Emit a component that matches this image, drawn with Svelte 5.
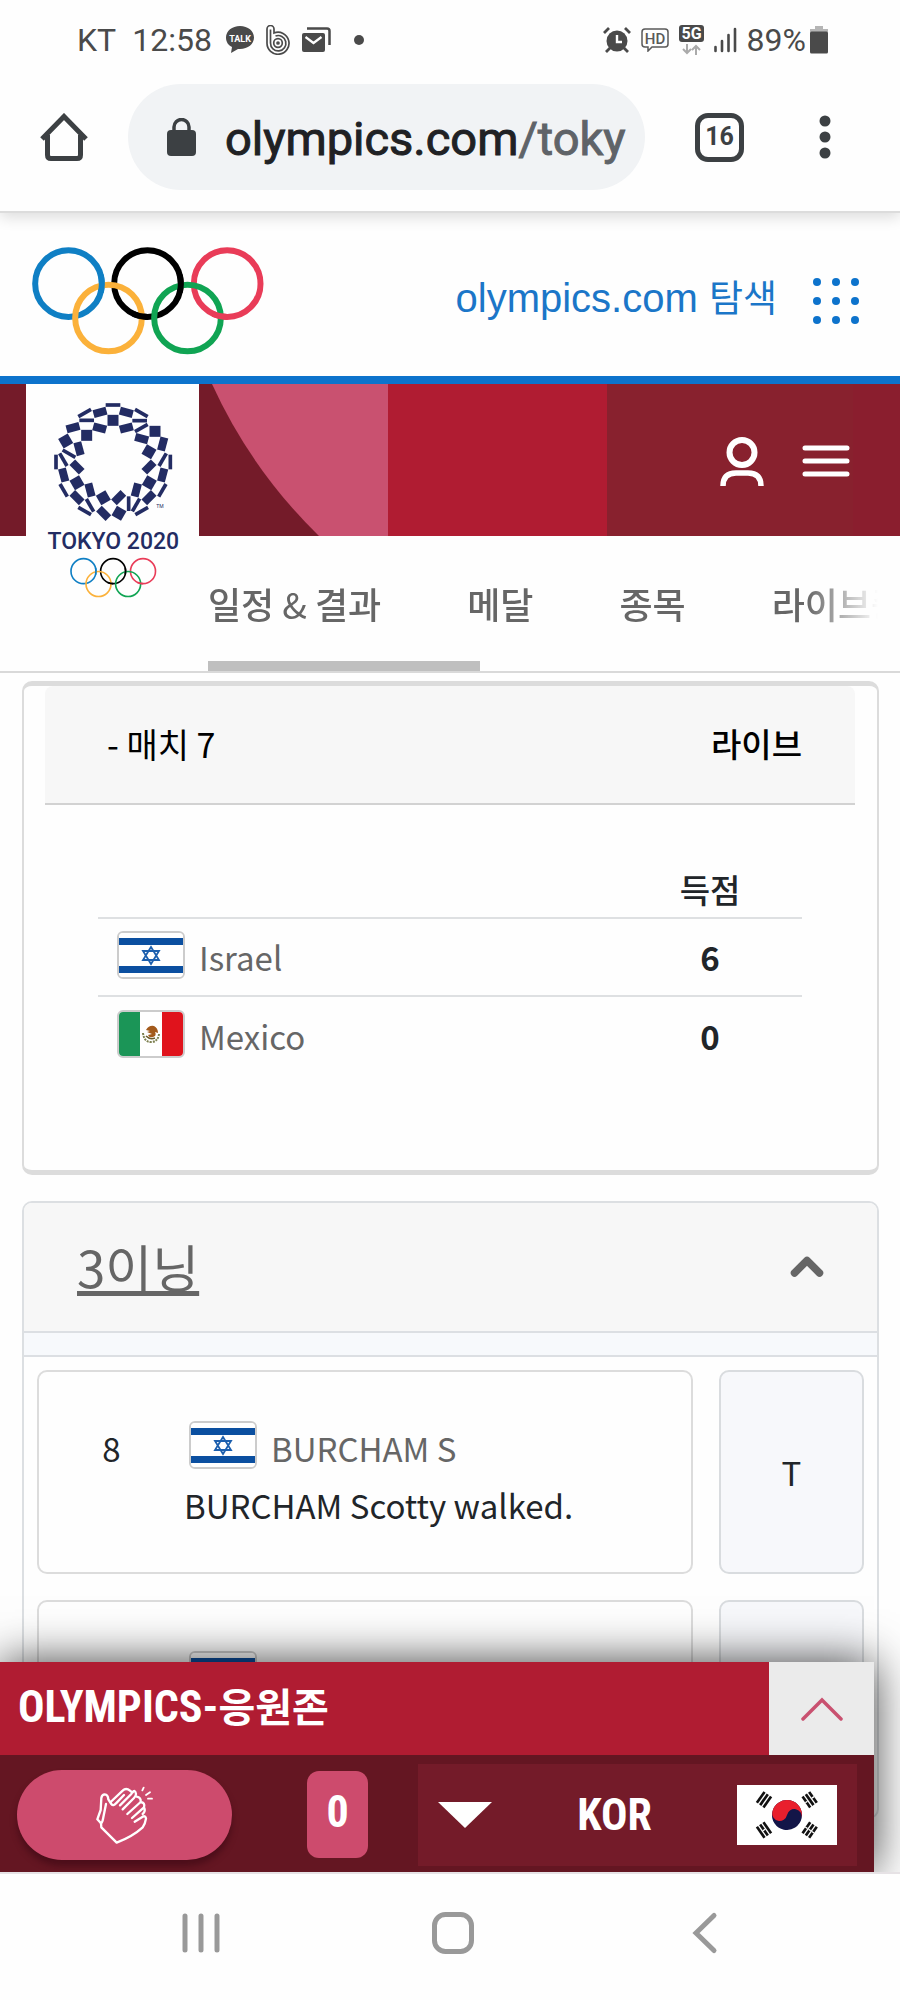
<script>
  const squares = [
    // cx, cy, width, height, angle
    [341, 105, 44, 11, 0], [341, 151, 33, 33, 0],
    [302, 127, 40, 24, -15], [381, 127, 40, 24, 15],
    [256, 129, 44, 11, -30], [426, 129, 44, 11, 30],
    [262, 151, 44, 11, 0], [421, 152, 44, 11, 0],
    [301, 174, 40, 24, 15], [381, 174, 40, 24, -15],
    [221, 173, 40, 24, -15], [262, 196, 33, 33, 0],
    [199, 213, 33, 33, -30], [239, 236, 24, 40, -15],
    [209, 251, 44, 11, 30], [170, 276, 11, 44, 0],
    [192, 269, 44, 11, 60], [233, 291, 40, 24, 45],
    [193, 315, 24, 40, -15], [233, 338, 33, 33, -30],
    [193, 361, 44, 11, 60], [233, 383, 40, 24, 45],
    [272, 360, 24, 40, -15], [272, 406, 44, 11, 60],
    [256, 423, 44, 11, 30], [312, 383, 33, 33, -30],
    [313, 430, 40, 24, 45], [358, 383, 40, 24, -45],
    [359, 430, 33, 33, 30], [388, 401, 11, 44, 0],
    [410, 405, 44, 11, -60], [427, 423, 44, 11, -30],
    [411, 360, 24, 40, 15], [449, 383, 40, 24, -45],
    [489, 361, 44, 11, -60], [450, 338, 33, 33, 30],
    [490, 315, 24, 40, 15], [449, 291, 40, 24, -45],
    [490, 269, 44, 11, -60], [513, 276, 11, 44, 0],
    [449, 245, 33, 33, 30], [490, 222, 24, 40, 15],
    [427, 206, 40, 24, 15], [467, 184, 33, 33, 0],
    [426, 174, 44, 11, -30]
  ];
  const menu = ['메달', '종목', '라이브중'];
  const teams = [
    { name: 'Israel', flag: 'isr', score: 6 },
    { name: 'Mexico', flag: 'mex', score: 0 }
  ];
  const plays = [
    { order: '8', player: 'BURCHAM S', text: 'BURCHAM Scotty walked.', half: 'T' },
    { order: '', player: '', text: '', half: '' }
  ];
  const trigrams = [
    { x: 941, y: 749, a: -55, broken: [] },
    { x: 1078, y: 749, a: 55, broken: [0, 2] },
    { x: 941, y: 840, a: 55, broken: [1] },
    { x: 1078, y: 840, a: -55, broken: [0, 1, 2] }
  ];
</script>

{#snippet rings(sw)}
  <g fill="none" stroke-width={sw}>
    <circle cx="204" cy="220" r="100" stroke="#0f7fc4" />
    <circle cx="441" cy="220" r="100" stroke="#000" />
    <circle cx="680" cy="220" r="100" stroke="#e93c58" />
    <circle cx="324" cy="323" r="100" stroke="#fbb13a" />
    <circle cx="561" cy="323" r="100" stroke="#10a453" />
    <path d="M300.6 194A100 100 0 0 1 300.6 246" stroke="#0f7fc4" />
    <path d="M537.6 194A100 100 0 0 1 537.6 246M441 320A100 100 0 0 1 398.7 310.6" stroke="#000" />
    <path d="M680 320A100 100 0 0 1 637.7 310.6" stroke="#e93c58" />
  </g>
{/snippet}

{#snippet flag(code)}
  <svg class="flag" viewBox="0 0 64 44" preserveAspectRatio="none" aria-hidden="true">
    {#if code === 'mex'}
      <rect width="64" height="44" fill="#fff" />
      <rect width="21" height="44" fill="#1b9557" />
      <rect x="43" width="21" height="44" fill="#e0131c" />
      <path d="M24 21q1 9 8 9t8-8" fill="none" stroke="#7d8050" stroke-width="2" stroke-dasharray="2 1" />
      <path d="M27 18q3-5 8-4 4 2 4 7l-3-1q2 4-2 5-4 1-5-2l4-1-5-2 3-1z" fill="#a35a1c" />
      <path d="M27 24q4 4 9 2" fill="none" stroke="#6b5a2a" stroke-width="1.5" />
    {:else}
      <rect width="64" height="44" fill="#fff" />
      <rect y="5" width="64" height="7" fill="#0b4fa0" />
      <rect y="33" width="64" height="7" fill="#0b4fa0" />
      <path d="M32 14l8 13H24zM32 31l8-13H24z" fill="none" stroke="#1c5fae" stroke-width="1.8" />
    {/if}
  </svg>
{/snippet}

<div class="screen">
  <div class="status">
    <span class="carrier">KT</span>
    <span class="clock">12:58</span>
    <svg width="28" height="28" viewBox="0 0 28 28" aria-hidden="true">
      <path d="M14 0C6 0 0 5 0 11.500c0 4.500 2.500 8 6 9.500L5 27l7-4h2c8 0 14-5 14-11.500S22 0 14 0z" fill="#4a4a4a" />
      <text x="14" y="15.500" text-anchor="middle" font-size="9" font-weight="700" fill="#fff">TALK</text>
    </svg>
    <svg class="s-b" width="24" height="30" viewBox="0 0 24 30" fill="none" stroke="#4a4a4a" stroke-width="1.700" aria-hidden="true">
      <path d="M1 18V4a3 3 0 0 1 7 0v4a11 11 0 1 1-7 10z" />
      <path d="M4.500 18V4.500M4.500 18a7.700 7.700 0 1 0 5-7" />
      <circle cx="12" cy="18" r="4.300" /><circle cx="12" cy="18" r="1" />
    </svg>
    <svg class="s-mail" width="29" height="26" viewBox="0 0 29 26" aria-hidden="true">
      <rect y="6" width="23" height="19" rx="2" fill="#4a4a4a" />
      <path d="M5 1.500h20q2.500 0 2.500 2.500v14" fill="none" stroke="#4a4a4a" stroke-width="2.500" />
      <path d="M3.500 10l8 6 8-6" fill="none" stroke="#fff" stroke-width="2.200" />
    </svg>
    <svg class="s-dot" width="10" height="10" viewBox="0 0 10 10" aria-hidden="true"><circle cx="5" cy="5" r="5" fill="#4a4a4a" /></svg>
    <span class="fill"></span>
    <svg width="28" height="26" viewBox="0 0 28 26" aria-hidden="true">
      <circle cx="14" cy="14" r="10.500" fill="#4a4a4a" />
      <path d="M1 6l5-5M27 6l-5-5M7 21l-4 4M21 21l4 4" stroke="#4a4a4a" stroke-width="2.800" />
      <path d="M14 8v7h5" fill="none" stroke="#fff" stroke-width="2.400" />
    </svg>
    <svg width="28" height="24" viewBox="0 0 28 24" aria-hidden="true">
      <path d="M4 1h20q3 0 3 3v12q0 3-3 3H11l-4 4v-4H4q-3 0-3-3V4q0-3 3-3z" fill="none" stroke="#5a5a5a" stroke-width="1.500" />
      <text x="14" y="15.500" text-anchor="middle" font-size="15" font-weight="500" fill="#5a5a5a">HD</text>
    </svg>
    <svg width="25" height="30" viewBox="0 0 25 30" aria-hidden="true">
      <rect width="25" height="17" rx="3" fill="#4a4a4a" />
      <text x="12.500" y="14" text-anchor="middle" font-size="16" font-weight="700" fill="#fff">5G</text>
      <path d="M8 19v9m-4-4l4 4 4-4M17 30v-9m-4 4l4-4 4 4" fill="none" stroke="#aaa" stroke-width="2" />
    </svg>
    <svg width="23" height="26" viewBox="0 0 23 26" stroke="#4a4a4a" stroke-width="2.600" stroke-linecap="round" aria-hidden="true">
      <path d="M1.500 20v4M8 14v10M14.500 8v16M21 2v22" />
    </svg>
    <span class="charge"><span>89%</span>
      <svg width="18" height="28" viewBox="0 0 18 28" aria-hidden="true">
        <path d="M5 0h8v3h5v3H0V3h5z" fill="#b5b5b5" /><rect y="5.500" width="18" height="22" rx="1.500" fill="#4a4a4a" />
      </svg>
    </span>
  </div>

  <div class="toolbar">
    <button class="icon" aria-label="Home">
      <svg width="48" height="48" viewBox="0 0 48 48" fill="none" stroke="#3c4043" stroke-width="5" stroke-linejoin="round" aria-hidden="true">
        <path d="M2 26L24 3.500 46 26" stroke-linejoin="miter" /><path d="M7.500 22v20q0 3.500 3.500 3.500h26q3.500 0 3.500-3.500V22" />
      </svg>
    </button>
    <button class="address">
      <svg width="29" height="38" viewBox="0 0 29 38" aria-hidden="true">
        <rect y="12" width="29" height="26" rx="4" fill="#3c4043" />
        <path d="M7 14V9a7.500 7.500 0 0 1 15 0v5" fill="none" stroke="#3c4043" stroke-width="3.500" />
      </svg>
      <span class="url">olympics.com<span class="path">/toky</span></span>
    </button>
    <button class="icon tabs" aria-label="Tabs">16</button>
    <button class="icon more" aria-label="More">
      <svg width="12" height="44" viewBox="0 0 12 44" fill="#3c4043" aria-hidden="true"><circle cx="6" cy="6" r="5.500" /><circle cx="6" cy="22" r="5.500" /><circle cx="6" cy="38" r="5.500" /></svg>
    </button>
  </div>

  <main>
    <header class="site">
      <a href="#top" aria-label="Olympics">
        <svg width="232" height="108" viewBox="95 110 695 324" aria-hidden="true">{@render rings(18)}</svg>
      </a>
      <a class="explore" href="#explore"><span class="label">olympics.com <span class="ko">탐색</span></span>
        <svg width="46" height="46" viewBox="0 0 46 46" fill="#0d73cc" aria-hidden="true">
          {#each [4, 23, 42] as y}{#each [4, 23, 42] as x}<circle cx={x} cy={y} r="4" />{/each}{/each}
        </svg>
      </a>
    </header>

    <div class="games">
      <div class="banner">
        <svg class="pattern" viewBox="0 0 900 151" preserveAspectRatio="none" aria-hidden="true">
          <rect width="900" height="151" fill="#741b29" />
          <path d="M212 0Q251 85 319 151H389V0z" fill="#c95170" />
          <rect x="388" width="220" height="151" fill="#b01c32" />
          <rect x="607" width="246" height="151" fill="#88212e" />
          <rect x="853" width="47" height="151" fill="#8a1e2e" />
        </svg>
        <button class="icon" aria-label="Account">
          <svg width="44" height="49" viewBox="0 0 44 49" fill="none" stroke="#fff" aria-hidden="true">
            <circle cx="22" cy="15.500" r="12.500" stroke-width="6" /><path d="M3 49q0-13 13-13h12q13 0 13 13" stroke-width="5.500" />
          </svg>
        </button>
        <button class="icon" aria-label="Menu">
          <svg width="48" height="34" viewBox="0 0 48 34" stroke="#fff" stroke-width="5" stroke-linecap="round" aria-hidden="true"><path d="M3 4h42M3 17h42M3 30h42" /></svg>
        </button>
      </div>
      <a class="emblem" href="#tokyo" aria-label="Tokyo 2020">
        <svg width="173" height="224" viewBox="80 42 519 672" aria-hidden="true">
          <g fill="#232c63">
            {#each squares as [x, y, w, h, a]}
              <rect x={x - w / 2} y={y - h / 2} width={w} height={h} transform="rotate({a} {x} {y})" />
            {/each}
            <text x="342" y="536" text-anchor="middle" font-size="69" font-weight="500">TOKYO 2020</text>
            <text x="482" y="415" text-anchor="middle" font-size="15">TM</text>
          </g>
          <g transform="translate(176 521) scale(.375)">{@render rings(13)}</g>
        </svg>
      </a>
      <nav>
        <div class="tabs-row">
          <a href="#schedule" class="current">일정 <span class="amp">&amp;</span> 결과</a>
          {#each menu as item}<a href="#{item}">{item}</a>{/each}
        </div>
      </nav>
    </div>

    <section class="match">
      <div class="match-head"><span>- 매치 7</span><strong>라이브</strong></div>
      <table>
        <thead><tr><td></td><th scope="col">득점</th></tr></thead>
        <tbody>
          {#each teams as t}
            <tr>
              <th scope="row"><span class="team">{@render flag(t.flag)}{t.name}</span></th>
              <td>{t.score}</td>
            </tr>
          {/each}
        </tbody>
      </table>
    </section>

    <section class="inning">
      <button class="inning-head">
        <span>3이닝</span>
        <svg width="34" height="23" viewBox="0 0 34 23" fill="none" stroke="#666" stroke-width="7.500" stroke-linejoin="round" stroke-linecap="round" aria-hidden="true"><path d="M4.500 18L17 5.500 29.500 18" /></svg>
      </button>
      <div class="strip"></div>
      <ul>
        {#each plays as p}
          <li>
            <div class="play">
              <span class="order">{p.order}</span>
              <div>
                <div class="player">{@render flag('isr')}{p.player}</div>
                <div>{p.text}</div>
              </div>
            </div>
            <div class="half">{p.half}</div>
          </li>
        {/each}
      </ul>
    </section>

    <aside class="cheer">
      <div class="cheer-top">
        <h2>OLYMPICS-<span class="ko">응원존</span></h2>
        <button class="expand" aria-label="Expand">
          <svg width="44" height="24" viewBox="0 0 44 24" fill="none" stroke="#c95170" stroke-width="3.500" stroke-linecap="round" aria-hidden="true"><path d="M3 22L22 3l19 19" /></svg>
        </button>
      </div>
      <div class="cheer-row">
        <button class="clap" aria-label="Clap">
          <svg width="60" height="60" viewBox="15 15 180 180" fill="none" stroke="#fff" stroke-width="7" stroke-linecap="round" stroke-linejoin="round" aria-hidden="true">
            <path d="M33 130L22 118 32 90 34 54Q36 43 44 43 54 44 55 58L64 72Q70 80 78 70L102 45" />
            <path d="M48 72L40 112Q38 126 33 130L34 142 80 188Q130 168 158 142 166 130 168 116 167 106 158 110L134 125" />
            <path d="M62 66L98 32Q108 22 120 32L127 38Q135 26 138 42 138 48 132 54L98 88" />
            <path d="M90 76L124 42M140 50Q154 52 152 66L112 102M152 66Q166 68 162 82L126 114M162 82Q168 94 158 102" />
            <path d="M157 31L161 23M168 45L180 37M174 56L186 56" stroke-width="5.500" />
          </svg>
        </button>
        <span class="count">0</span>
        <button class="country">
          <svg width="54" height="26" viewBox="0 0 54 26" aria-hidden="true"><path d="M0 0h54L27 26z" fill="#fff" /></svg>
          <span>KOR</span>
          <svg width="100" height="60" viewBox="860 705 300 180" aria-hidden="true">
            <rect x="860" y="705" width="300" height="180" fill="#fff" />
            <g transform="rotate(12 1010 795)">
              <circle cx="1010" cy="795" r="45" fill="#131548" />
              <path d="M965 795a45 45 0 0 1 90 0a22.500 22.500 0 0 0-45 0a22.500 22.500 0 0 1-45 0" fill="#e91f2d" />
            </g>
            {#each trigrams as t}
              <g transform="translate({t.x} {t.y}) rotate({t.a})">
                {#each [-12, 0, 12] as dy, i}
                  <rect x="-20" y={dy - 4} width="40" height="8" fill="#111" />
                  {#if t.broken.includes(i)}<rect x="-2" y={dy - 4} width="4" height="8" fill="#fff" />{/if}
                {/each}
              </g>
            {/each}
          </svg>
        </button>
      </div>
    </aside>
  </main>

  <div class="system">
    <button class="icon" aria-label="Recent apps"><svg width="44" height="44" viewBox="0 0 44 44" stroke="#999" stroke-width="5" stroke-linecap="round" aria-hidden="true"><path d="M6 5v34M22 5v34M38 5v34" /></svg></button>
    <button class="icon" aria-label="Home screen"><svg width="44" height="44" viewBox="0 0 44 44" fill="none" stroke="#999" stroke-width="5" aria-hidden="true"><rect x="3.500" y="3.500" width="37" height="37" rx="11" /></svg></button>
    <button class="icon" aria-label="Back"><svg width="44" height="44" viewBox="0 0 44 44" fill="none" stroke="#999" stroke-width="5" stroke-linecap="round" aria-hidden="true"><path d="M31 4.500L13 22l18 17.500" /></svg></button>
  </div>
</div>

<style>
  :global(body) { margin: 0; background: #fff; }
  .screen, .screen * { box-sizing: border-box; }
  .screen {
    display: flex;
    flex-direction: column;
    height: 100vh;
    overflow: hidden;
    font-family: "Noto Sans CJK KR", sans-serif;
    font-size: 33px;
    color: #212529;
    background: #fefefe;
  }
  button { border: 0; padding: 0; background: none; font: inherit; color: inherit; }
  a { color: inherit; text-decoration: none; }
  svg { display: block; flex: none; }
  .icon { display: flex; align-items: center; justify-content: center; }

  .status {
    display: flex;
    align-items: center;
    gap: 10px;
    height: 78px;
    padding: 2px 72px 0 77px;
    font: 32px/40px Roboto, sans-serif;
    color: #4a4a4a;
    background: #fefefe;
    position: relative;
    z-index: 3;
    flex: none;
  }
  .carrier { margin-right: 6px; }
  .clock { margin-right: 4px; }
  .s-b { margin-left: 2px; }
  .s-mail { margin-left: 2px; }
  .s-dot { margin-left: 13px; }
  .fill { flex: 1; }
  .charge { display: flex; align-items: center; gap: 4px; }

  .toolbar {
    display: flex;
    align-items: center;
    gap: 50px;
    padding: 6px 44px 21px 40px;
    border-bottom: 2px solid #dcdcdc;
    box-shadow: 0 4px 14px rgba(0, 0, 0, .14);
    position: relative;
    z-index: 2;
    font-family: Roboto, sans-serif;
    background: #fefefe;
    flex: none;
  }
  .address {
    flex: 1;
    min-width: 0;
    display: flex;
    align-items: center;
    gap: 29px;
    height: 106px;
    margin-left: -10px;
    padding: 0 20px 0 39px;
    border-radius: 53px;
    background: #f1f3f5;
    overflow: hidden;
  }
  .url { padding-top: 2px; font-size: 47px; color: #202124; white-space: nowrap; -webkit-text-stroke: 1px currentColor; }
  .path { color: #5f6368; }
  .tabs {
    width: 49px;
    height: 49px;
    border: 5px solid #3c4043;
    border-radius: 13px;
    font-size: 25px;
    line-height: 30px;
    font-weight: 700;
    color: #3c4043;
  }
  .more { width: 62px; }

  main { flex: 1; min-height: 0; overflow: hidden; position: relative; }
  .site {
    display: flex;
    align-items: center;
    justify-content: space-between;
    height: 171px;
    padding: 12px 41px 0 32px;
    border-bottom: 8px solid #0d73cc;
  }
  .explore {
    display: flex;
    align-items: center;
    gap: 36px;
    font: 40px/50px "Liberation Sans", sans-serif;
    color: #1b76c8;
  }
  .label { margin-bottom: 8px; }
  .ko { font: 37px/50px "Noto Sans CJK KR", sans-serif; }

  .games { position: relative; }
  .banner {
    position: relative;
    display: flex;
    align-items: center;
    justify-content: flex-end;
    gap: 38px;
    height: 152px;
    padding: 2px 50px 0 0;
  }
  .banner .icon { position: relative; }
  .pattern { position: absolute; inset: 0; width: 100%; height: 100%; }
  .emblem {
    position: absolute;
    top: 0;
    left: 26px;
    background: #fefefe;
    font-family: Roboto, sans-serif;
  }
  nav {
    height: 137px;
    padding: 0 22px 0 208px;
    border-bottom: 2px solid #d9d9d9;
  }
  .tabs-row {
    display: flex;
    gap: 86px;
    height: 135px;
    overflow: hidden;
    white-space: nowrap;
    font-size: 36px;
    line-height: 135px;
    font-weight: 500;
    color: #666;
    -webkit-mask-image: linear-gradient(to left, transparent, #000 72px);
    mask-image: linear-gradient(to left, transparent, #000 72px);
  }
  .current { position: relative; }
  .current::after {
    content: "";
    position: absolute;
    left: 0;
    bottom: 0;
    width: 272px;
    height: 10px;
    background: #bfbfbf;
  }
  .amp { font-weight: 400; }

  .match {
    margin: 8px 21px 0 22px;
    padding: 0 22px 95px 21px;
    border: 2px solid #dcdcdc;
    border-width: 5px 2px;
    border-radius: 10px;
  }
  .match-head {
    display: flex;
    justify-content: space-between;
    height: 119px;
    padding: 0 53px 0 62px;
    font-size: 34px;
    line-height: 115px;
    border-bottom: 2px solid #d2d2d2;
    border-radius: 8px 8px 0 0;
    background: #f7f7f7;
    color: #000;
  }
  strong { font-size: 33px; font-weight: 500; }
  table {
    width: calc(100% - 106px);
    margin: 60px 53px 0;
    border-spacing: 0;
    line-height: 48px;
  }
  th, td { padding: 0; border-bottom: 2px solid #dee0e2; text-align: center; font-weight: 500; }
  thead td, thead th { height: 54px; padding-bottom: 4px; }
  tbody th, tbody td { height: 78px; font-weight: 700; }
  tbody tr:last-child > * { border: 0; }
  tr > :last-child { width: 184px; }
  tbody th { text-align: left; font-weight: 400; color: #666; }
  .team { display: flex; align-items: center; gap: 14px; padding-left: 19px; }
  .flag {
    width: 68px;
    height: 48px;
    margin-bottom: 4px;
    border: 2px solid #ccc;
    border-radius: 6px;
  }

  .inning {
    margin: 26px 21px 0 22px;
    border: 2px solid #dcdfe2;
    border-radius: 10px;
    overflow: hidden;
  }
  .inning-head {
    display: flex;
    align-items: center;
    justify-content: space-between;
    width: 100%;
    height: 128px;
    padding: 0 53px 2px 53px;
    background: #f7f7f7;
    color: #666;
    font-size: 51px;
    line-height: 74px;
    text-decoration: underline;
    text-decoration-thickness: 5px;
    text-decoration-skip-ink: none;
    text-underline-offset: 3px;
  }
  .strip { height: 26px; border: solid #dcdfe3; border-width: 2px 0; background: #f7f9fc; }
  ul { list-style: none; margin: 0; padding: 13px; display: grid; gap: 26px; }
  li { display: grid; grid-template-columns: 1fr 145px; gap: 26px; height: 204px; }
  .play, .half { border: 2px solid #dcdcdc; border-radius: 10px; }
  .play {
    display: grid;
    grid-template-columns: 145px 1fr;
    padding-top: 48px;
    line-height: 57px;
    white-space: nowrap;
  }
  .order { text-align: center; }
  .player { display: flex; align-items: center; gap: 14px; height: 57px; padding-left: 5px; color: #666; }
  .player .flag { margin-bottom: 8px; }
  .half { display: flex; align-items: center; justify-content: center; background: #f7f8fb; border-color: #d9dcdf; }

  .cheer {
    position: absolute;
    left: 0;
    right: 26px;
    bottom: 0;
    box-shadow: 0 0 44px rgba(0, 0, 0, .75);
    color: #fff;
    font-family: "Roboto Condensed", Roboto, sans-serif;
    font-size: 44px;
    font-weight: 700;
  }
  .cheer-top { display: flex; height: 93px; background: #b01c32; }
  h2 { flex: 1; margin: 0; padding-left: 18px; font-size: 44px; line-height: 86px; white-space: nowrap; }
  h2 .ko { font: 700 40px/86px "Noto Sans CJK KR", sans-serif; }
  .expand { width: 105px; display: flex; align-items: center; justify-content: center; background: #ebebeb; }
  .cheer-row { display: flex; align-items: center; height: 117px; padding: 2px 17px 0; background: #641622; }
  .clap {
    display: flex;
    align-items: center;
    justify-content: center;
    width: 215px;
    height: 90px;
    border-radius: 45px;
    background: #cd4b6d;
    box-shadow: 0 6px 6px rgba(60, 8, 20, .6);
  }
  .count {
    width: 61px;
    height: 87px;
    margin-left: 75px;
    border-radius: 12px;
    background: #cd4b6d;
    text-align: center;
    line-height: 82px;
  }
  .country {
    flex: 1;
    display: flex;
    align-items: center;
    justify-content: space-between;
    height: 102px;
    margin-left: 50px;
    padding: 0 20px;
    background: #741b29;
  }

  .system {
    display: flex;
    justify-content: space-between;
    align-items: center;
    height: 128px;
    padding: 0 173px 8px 179px;
    border-top: 2px solid #e6e2e5;
    background: #fefefe;
    position: relative;
    z-index: 1;
    flex: none;
  }
</style>
